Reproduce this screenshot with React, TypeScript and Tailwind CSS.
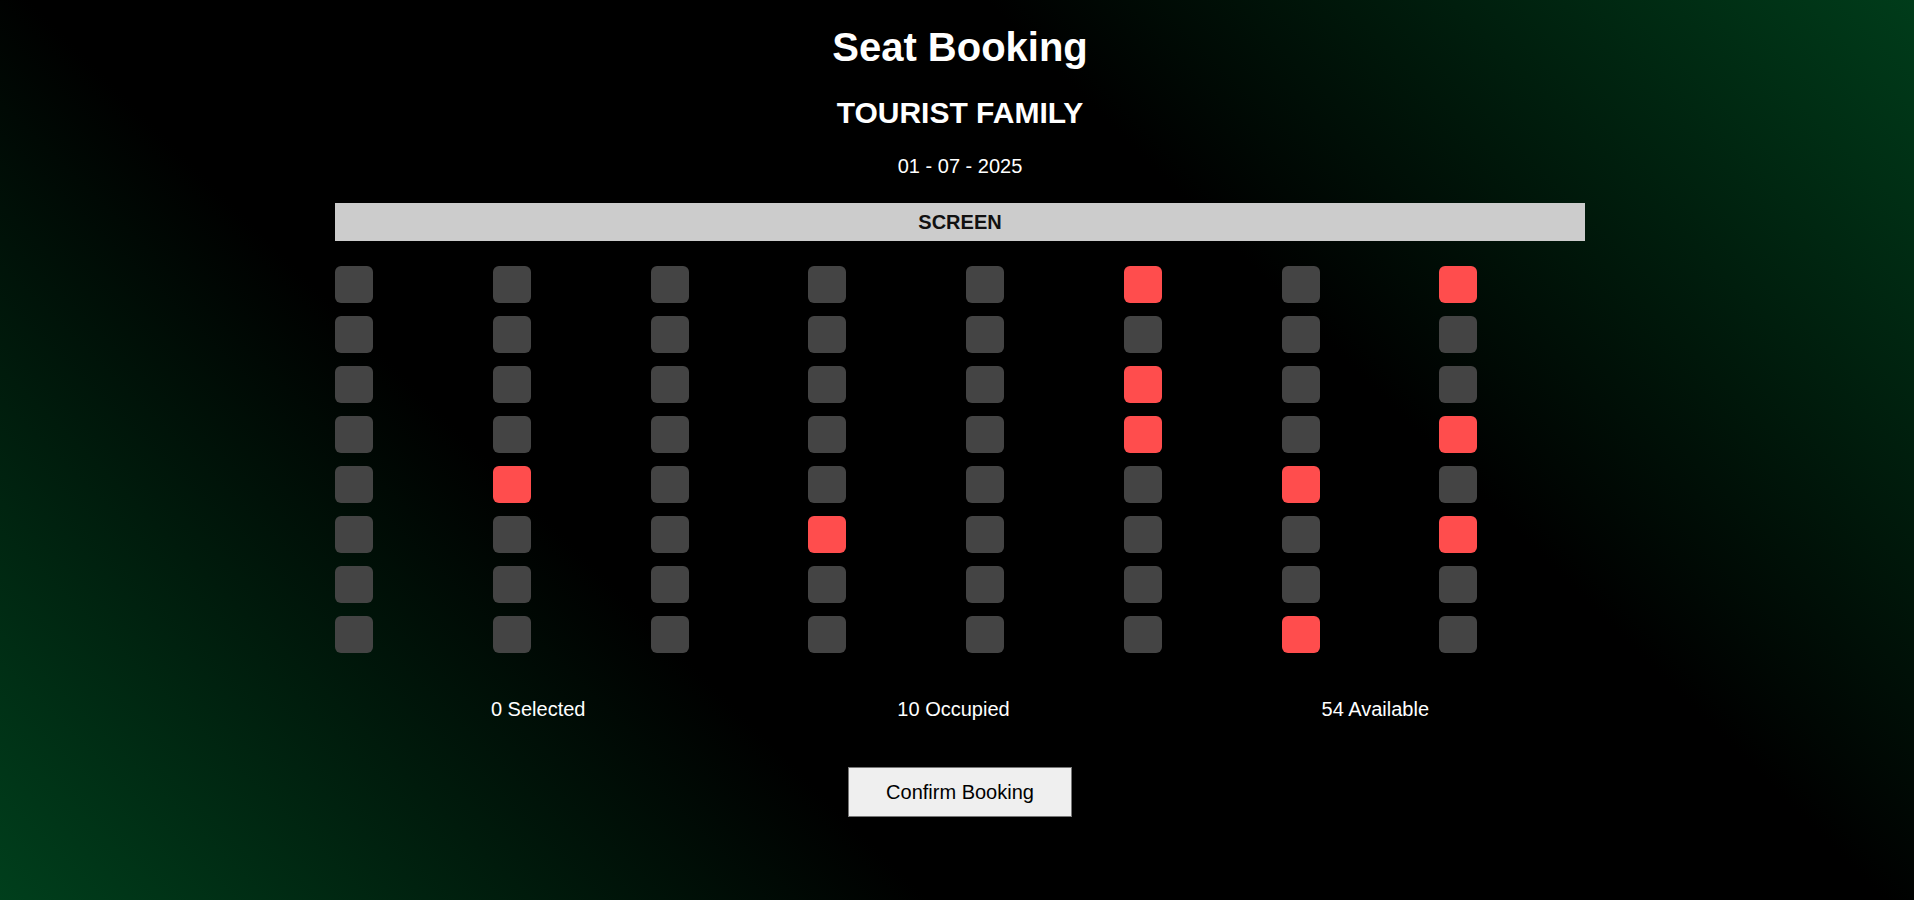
const occupied: Record<number, number[]> = {
  0: [5, 7],
  2: [5],
  3: [5, 7],
  4: [1, 6],
  5: [3, 7],
  7: [6],
};

const rows = Array.from({ length: 8 }, (_, r) => r);
const cols = Array.from({ length: 8 }, (_, c) => c);

function Seat({ taken }: { taken: boolean }) {
  return (
    <div
      className={
        taken
          ? "w-[38px] h-[37px] rounded-[6px] bg-[#ff4d4d]"
          : "w-[38px] h-[37px] rounded-[6px] bg-[#444444] cursor-pointer"
      }
    />
  );
}

export default function App() {
  const takenCount = Object.values(occupied).reduce((n, list) => n + list.length, 0);
  const available = rows.length * cols.length - takenCount;

  return (
    <div className="min-h-screen w-full text-white font-['Liberation_Sans',Arial,sans-serif] bg-[linear-gradient(45deg,#003f1c_0%,#000000_33%,#000000_67%,#003c1a_100%)] pl-[6px]">
      <div className="w-[1250px] mx-auto flex flex-col items-center">
        <h1 className="pt-[27px] text-[40px] leading-none font-bold">Seat Booking</h1>
        <h2 className="mt-[31px] text-[30px] leading-none font-bold">TOURIST FAMILY</h2>
        <p className="mt-[28px] text-[20px] leading-none">01 - 07 - 2025</p>

        {/* Screen */}
        <div className="mt-[27px] w-full h-[38px] bg-[#cccccc] flex items-center justify-center">
          <span className="text-[20px] leading-none font-bold text-[#111111]">SCREEN</span>
        </div>

        {/* Seats */}
        <div className="mt-[25px] w-full grid grid-cols-8 gap-x-3 gap-y-[13px]">
          {rows.map((r) =>
            cols.map((c) => <Seat key={`${r}-${c}`} taken={(occupied[r] || []).includes(c)} />)
          )}
        </div>

        {/* Summary */}
        <div className="mt-[46px] w-full flex justify-around text-[20px] leading-none">
          <span>0 Selected</span>
          <span>{takenCount} Occupied</span>
          <span>{available} Available</span>
        </div>

        <button className="mt-[48px] w-[224px] h-[50px] bg-[#efefef] border border-[#767676] text-black text-[20px] leading-none">
          Confirm Booking
        </button>
      </div>
    </div>
  );
}
